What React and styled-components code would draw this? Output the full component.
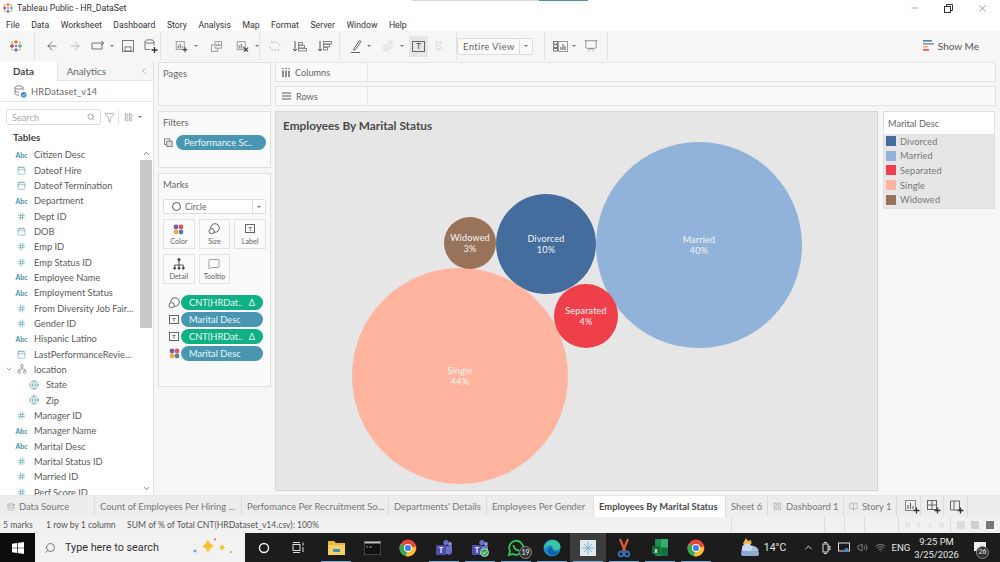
import React from 'react'
import styled, { createGlobalStyle } from 'styled-components'
import {
  ArrowLeft, ArrowRight, ChevronLeft, ChevronRight, ChevronFirst, ChevronLast, ChevronUp, ChevronDown, Search, Filter, Minus, X,
  Calendar, Hash, Globe, Network, Presentation, Pin, Paperclip, MessageSquare, Database, LayoutGrid, BookOpen, Volume2, Wifi,
} from 'lucide-react'

const Global = createGlobalStyle`
  html, body { margin: 0; padding: 0; background: #fff; }
  * { box-sizing: border-box; }
  body { font-family: Lato, "Open Sans", "Liberation Sans", sans-serif; color: #555; }
`

const Page = styled.div`
  position: relative;
  width: 1000px;
  height: 562px;
  display: flex;
  flex-direction: column;
  overflow: hidden;
  background: #fff;
`

const TitleBar = styled.div`
  height: 16px;
  flex: none;
  display: flex;
  align-items: center;
  padding-left: 2px;
  font-family: Roboto, sans-serif;
  font-size: 8.7px;
  color: #333;
  gap: 3px;
`

const TopStrip = styled.div`
  position: absolute;
  top: 0;
  left: 412px;
  width: 176px;
  height: 1px;
  background: linear-gradient(to right, #d8d8d8 0 72%, #4a90a8 72% 100%);
`

const WindowButtons = styled.div`
  margin-left: auto;
  padding-right: 1px;
  display: flex;
  align-items: center;
  color: #333;
`

const WindowButton = styled.div`
  width: 33.5px;
  height: 16px;
  display: flex;
  align-items: center;
  justify-content: center;
`

const MenuBar = styled.div`
  height: 15px;
  flex: none;
  display: flex;
  align-items: center;
  padding: 2px 0 0 6px;
  gap: 11.5px;
  font-family: Roboto, sans-serif;
  font-size: 8.7px;
  color: #333;
`

const Toolbar = styled.div`
  height: 30px;
  flex: none;
  background: #f6f6f6;
  display: flex;
  align-items: center;
  color: #666;
`

const ToolGroup = styled.div`
  height: 28px;
  width: ${p => p.$w}px;
  flex: none;
  display: flex;
  align-items: center;
  gap: ${p => p.$gap ?? 8}px;
  padding-left: ${p => p.$pad ?? 8}px;
  border-right: 1px solid #e2e2e2;
`

const ToolSpot = styled.div`
  width: 19px;
  height: 21px;
  display: flex;
  align-items: center;
  justify-content: center;
  background: ${p => (p.$on ? '#e6e6e6' : 'transparent')};
`

const Caret = styled.span`
  width: 0;
  height: 0;
  flex: none;
  margin-left: ${p => p.$ml ?? -4}px;
  border-left: 2px solid transparent;
  border-right: 2px solid transparent;
  border-top: 2px solid #777;
`

const Gap = styled.span`
  width: ${p => p.$w}px;
  flex: none;
`

const ViewSelect = styled.div`
  width: 76px;
  height: 17px;
  border: 1px solid #ddd;
  border-radius: 2px;
  background: #fafafa;
  display: flex;
  align-items: center;
  padding-left: 5px;
  font-size: 9.5px;
  letter-spacing: 0.35px;
  color: #666;
`

const SelectArrow = styled.div`
  margin-left: auto;
  width: 13px;
  height: 100%;
  border-left: 1px solid #ddd;
  display: flex;
  align-items: center;
  justify-content: center;
`

const ShowMe = styled.div`
  margin-left: auto;
  margin-right: 21px;
  display: flex;
  align-items: center;
  gap: 4px;
  font-size: 10px;
  color: #555;
`

const Main = styled.div`
  flex: 1;
  min-height: 0;
  display: flex;
  background: #f6f6f6;
`

const DataPane = styled.div`
  width: 154px;
  flex: none;
  background: #fff;
  border-right: 1px solid #e0e0e0;
  display: flex;
  flex-direction: column;
`

const PaneTabs = styled.div`
  height: 20px;
  flex: none;
  display: flex;
  align-items: center;
`

const PaneTab = styled.div`
  width: ${p => p.$w}px;
  height: 100%;
  display: flex;
  align-items: center;
  justify-content: space-between;
  padding: 0 4px 0 ${p => p.$pad}px;
  font-size: 9.8px;
  font-weight: ${p => (p.$on ? 700 : 400)};
  color: ${p => (p.$on ? '#444' : '#666')};
  background: ${p => (p.$on ? '#fff' : '#f6f6f6')};
  border-bottom: ${p => (p.$on ? 'none' : '1px solid #e4e4e4')};
  border-left: ${p => (p.$on ? 'none' : '1px solid #e4e4e4')};
`

const SourceRow = styled.div`
  height: 21px;
  flex: none;
  display: flex;
  align-items: center;
  gap: 4px;
  padding-left: 14px;
  font-size: 9.2px;
  letter-spacing: 0.2px;
  color: #666;
  border-bottom: 1px solid #e4e4e4;
`

const SearchRow = styled.div`
  height: 16px;
  margin: 7px 0 0 6px;
  flex: none;
  display: flex;
  align-items: center;
  gap: 3px;
  color: #666;
`

const SearchBox = styled.div`
  width: 95px;
  height: 16px;
  border: 1px solid #ddd;
  border-radius: 2px;
  display: flex;
  align-items: center;
  justify-content: space-between;
  padding: 0 5px;
  font-size: 9.2px;
  color: #aaa;
`

const RowDivider = styled.span`
  width: 1px;
  height: 15px;
  background: #e4e4e4;
  margin-right: 2px;
`

const TablesHead = styled.div`
  height: 22px;
  flex: none;
  padding: 6px 0 0 13px;
  font-size: 9.8px;
  font-weight: 700;
  color: #444;
`

const ListWrap = styled.div`
  flex: 1;
  min-height: 0;
  display: flex;
`

const FieldList = styled.div`
  flex: 1;
  min-width: 0;
  overflow: hidden;
`

const FieldRow = styled.div`
  height: 15.35px;
  display: flex;
  align-items: center;
  padding-left: ${p => (p.$sub ? 27 : p.$tree ? 5 : 15)}px;
  font-size: 9.3px;
  white-space: nowrap;
  color: #5a5a5a;
`

const FieldIcon = styled.span`
  width: 13px;
  margin-right: 6px;
  flex: none;
  display: flex;
  justify-content: center;
  align-items: center;
  color: ${p => (p.$tree ? '#666' : '#3f8f9f')};
  font-size: 6.8px;
  font-weight: 700;
`

const TreeCaret = styled.span`
  width: 10px;
  flex: none;
  color: #777;
  display: flex;
`

const ScrollBar = styled.div`
  width: 12px;
  flex: none;
  margin-right: 1px;
  display: flex;
  flex-direction: column;
  justify-content: space-between;
  align-items: center;
  color: #555;
`

const ScrollTrack = styled.div`
  width: 100%;
  flex: none;
  display: flex;
  flex-direction: column;
`

const ScrollBtn = styled.div`
  height: 13px;
  flex: none;
  display: flex;
  align-items: center;
  justify-content: center;
`

const ScrollThumb = styled.div`
  width: 100%;
  height: 168px;
  flex: none;
  background: #c9c9c9;
`

const CardsColumn = styled.div`
  width: 113px;
  margin: 1px 0 0 4px;
  flex: none;
  display: flex;
  flex-direction: column;
  gap: 5px;
`

const Card = styled.div`
  height: ${p => p.$h}px;
  flex: none;
  border: 1px solid #e0e0e0;
  background: #fafafa;
  padding: 5px 4px 0;
`

const CardTitle = styled.div`
  font-size: 9.4px;
  line-height: 11px;
  color: #666;
`

const FilterRow = styled.div`
  display: flex;
  align-items: center;
  gap: 3px;
  margin-top: 7px;
  padding-left: 1px;
  color: #777;
`

const Pill = styled.div`
  width: ${p => p.$w}px;
  height: 15px;
  flex: none;
  border-radius: 8px;
  background: ${p => (p.$green ? '#0fb083' : '#4996b2')};
  color: #e8f6f8;
  display: flex;
  align-items: center;
  justify-content: space-between;
  padding: 0 8px;
  font-size: 9.3px;
  white-space: nowrap;
`

const MarkSelect = styled.div`
  height: 15px;
  margin-top: 9px;
  border: 1px solid #ddd;
  border-radius: 2px;
  background: #fff;
  display: flex;
  align-items: center;
  padding-left: 8px;
  gap: 4px;
  font-size: 8.6px;
  color: #666;
`

const MarkRing = styled.span`
  width: 9px;
  height: 9px;
  border: 1px solid #555;
  border-radius: 50%;
`

const MarkGrid = styled.div`
  margin-top: 5px;
  display: grid;
  grid-template-columns: repeat(3, 1fr);
  column-gap: 4px;
  row-gap: 5px;
`

const MarkButton = styled.div`
  height: 30px;
  border: 1px solid #e2e2e2;
  background: #fbfbfb;
  display: flex;
  flex-direction: column;
  align-items: center;
  justify-content: flex-end;
  gap: 2px;
  padding-bottom: 2px;
  font-size: 7.2px;
  color: #666;
`

const PillList = styled.div`
  margin-top: 11px;
  display: flex;
  flex-direction: column;
  gap: 2px;
`

const PillRow = styled.div`
  display: flex;
  align-items: center;
  gap: 1px;
  padding-left: 5px;
`

const IconSlot = styled.span`
  width: 12px;
  flex: none;
  display: flex;
  justify-content: center;
`

const TextBadge = styled.span`
  width: ${p => (p.$big ? 13 : 10)}px;
  height: ${p => (p.$big ? 11 : 9)}px;
  flex: none;
  border: 1px solid #666;
  font-size: ${p => (p.$big ? 8 : 6.5)}px;
  line-height: ${p => (p.$big ? 9 : 7)}px;
  text-align: center;
  color: #444;
`

const Workspace = styled.div`
  width: 721px;
  margin: 1px 0 0 4px;
  flex: none;
  display: flex;
  flex-direction: column;
`

const Shelf = styled.div`
  height: 20px;
  margin-bottom: ${p => p.$mb}px;
  flex: none;
  border: 1px solid #e2e2e2;
  background: #fafafa;
  display: flex;
`

const ShelfLabel = styled.div`
  width: 92px;
  border-right: 1px solid #e6e6e6;
  display: flex;
  align-items: center;
  gap: 5px;
  padding-left: 6px;
  font-size: 9.2px;
  color: #666;
`

const Canvas = styled.div`
  display: flex;
  gap: 5px;
  align-items: flex-start;
`

const ChartPanel = styled.div`
  position: relative;
  width: 603px;
  height: 380px;
  flex: none;
  background: #e6e6e6;
  border: 1px solid #d4d4d4;
`

const ChartTitle = styled.div`
  position: absolute;
  top: 7px;
  left: 7px;
  font-size: 11.8px;
  line-height: 14px;
  font-weight: 700;
  color: #4a4a4a;
  white-space: nowrap;
`

const Legend = styled.div`
  width: 112px;
  height: 98px;
  flex: none;
  border: 1px solid #e0e0e0;
  background: #e6e6e6;
`

const LegendHead = styled.div`
  height: 22px;
  background: #fff;
  display: flex;
  align-items: center;
  padding-left: 4px;
  font-size: 9.2px;
  color: #666;
`

const LegendRow = styled.div`
  height: 14.6px;
  display: flex;
  align-items: center;
  gap: 4px;
  padding-left: 2px;
  font-size: 9.2px;
  letter-spacing: 0.15px;
  color: #777;
`

const Swatch = styled.span`
  width: 10px;
  height: 10px;
  background: ${p => p.$c};
`

const TabStrip = styled.div`
  height: 22px;
  flex: none;
  background: #ededed;
  border-top: 1px solid #e6e6e6;
  display: flex;
  font-size: 9.4px;
  color: #777;
`

const SheetTab = styled.div`
  width: ${p => p.$w}px;
  flex: none;
  display: flex;
  align-items: center;
  gap: 4px;
  padding-left: ${p => p.$pad ?? 5}px;
  white-space: nowrap;
  overflow: hidden;
  border-right: 1px solid #dcdcdc;
  background: ${p => (p.$on ? '#fff' : 'transparent')};
  color: ${p => (p.$on ? '#4a4a4a' : '#777')};
  font-weight: ${p => (p.$on ? 700 : 400)};
`

const StatusBar = styled.div`
  height: 16px;
  flex: none;
  background: #f1f1f1;
  display: flex;
  align-items: center;
  padding-left: 3px;
  font-size: 8.6px;
  color: #555;
`

const StatusItem = styled.span`
  width: ${p => p.$w}px;
  flex: none;
  white-space: nowrap;
`

const StatusRight = styled.div`
  margin-left: auto;
  height: 100%;
  display: flex;
  align-items: center;
`

const StatusCell = styled.div`
  width: ${p => p.$w}px;
  height: 100%;
  border-left: 1px solid #dcdcdc;
  display: flex;
  align-items: center;
  justify-content: space-around;
  padding: 0 3px;
  color: #c4c4c4;
`

const ViewDot = styled.span`
  width: ${p => p.$w ?? 8}px;
  height: 8px;
  background: ${p => p.$c};
`

const Taskbar = styled.div`
  height: 29px;
  flex: none;
  background: #1c1c1c;
  display: flex;
  align-items: center;
  color: #eee;
`

const StartButton = styled.div`
  width: 35px;
  height: 100%;
  background: #0d0d0d;
  display: flex;
  align-items: center;
  justify-content: center;
`

const TaskSearch = styled.div`
  width: 210px;
  height: 100%;
  background: #f2f2f2;
  display: flex;
  align-items: center;
  gap: 9px;
  padding-left: 9px;
  font-family: Roboto, sans-serif;
  font-size: 10.8px;
  color: #333;
`

const MirrorIcon = styled.span`
  display: flex;
  transform: scaleX(-1);
`

const Sparkles = styled.span`
  margin-left: auto;
  margin-right: 7px;
  display: flex;
`

const TaskApps = styled.div`
  display: flex;
  align-items: center;
  height: 100%;
  padding-left: 1px;
`

const TaskApp = styled.div`
  position: relative;
  width: ${p => p.$w ?? 36}px;
  height: 100%;
  margin-left: ${p => p.$ml ?? 0}px;
  display: flex;
  align-items: center;
  justify-content: center;
  background: ${p => (p.$on ? '#3c3c3c' : 'transparent')};
  &::after {
    content: '';
    position: absolute;
    left: 3px;
    right: 3px;
    bottom: 0;
    height: ${p => (p.$open ? 1.5 : 0)}px;
    background: #7fb4d8;
  }
`

const CountBadge = styled.span`
  position: absolute;
  right: ${p => p.$r ?? 2}px;
  bottom: 3px;
  width: 13px;
  height: 13px;
  border-radius: 50%;
  background: #333;
  border: 1px solid #888;
  font-size: 7px;
  line-height: 11px;
  text-align: center;
  color: #eee;
`

const Tray = styled.div`
  margin-left: auto;
  height: 100%;
  display: flex;
  align-items: center;
  font-family: Roboto, sans-serif;
  font-size: 9.6px;
  color: #e6e6e6;
`

const TrayItem = styled.div`
  position: relative;
  width: ${p => p.$w}px;
  height: 100%;
  flex: none;
  padding-left: ${p => p.$pl ?? 0}px;
  display: flex;
  align-items: center;
  justify-content: center;
`

const Temp = styled(TrayItem)`
  font-size: 10.4px;
`

const Clock = styled.div`
  width: 47px;
  flex: none;
  text-align: center;
  font-size: 9.4px;
  line-height: 13px;
`

const Ic = ({ w = 14, h = 14, children }) => (
  <svg width={w} height={h} viewBox={`0 0 ${w} ${h}`} fill="none" stroke="currentColor" strokeWidth="1">{children}</svg>
)

const Logo = ({ s = 14 }) => (
  <svg width={s} height={s} viewBox="0 0 14 14" strokeWidth="1.3">
    <path d="M7 1v4M5 3h4" stroke="#e8762b" />
    <path d="M7 9v4M5 11h4" stroke="#5a7fb8" />
    <path d="M1 7h4M3 5v4" stroke="#c23a4b" />
    <path d="M9 7h4M11 5v4" stroke="#6aa0b8" />
    <path d="M3 2.500v2M2 3.500h2M11 2.500v2M10 3.500h2M3 9.500v2M2 10.500h2M11 9.500v2M10 10.500h2" stroke="#e0a040" strokeWidth=".8" />
    <path d="M6 7h2M7 6v2" stroke="#5a6f90" />
  </svg>
)

const ChartAdd = ({ x }) => (
  <Ic w={16} h={15}>
    <rect x="1.500" y="1.500" width="10" height="10" stroke="#888" />
    <path d="M4 10V6M6.500 10V4M9 10V7" stroke="#555" />
    {x ? <path d="M10 9l5 5M15 9l-5 5" stroke="#333" strokeWidth="1.300" /> : <path d="M12.500 8.500v6M9.500 11.500h6" stroke="#333" strokeWidth="1.300" />}
  </Ic>
)

const SortIcon = ({ flip }) => (
  <Ic w={15} h={13}>
    <path d="M3 1v10M1 9l2 2 2-2" stroke="#555" />
    {(flip ? [[6, 2, 8], [6, 5, 6], [6, 8, 4]] : [[6, 3, 4], [6, 6, 6], [6, 9, 8]]).map(([x, y, l]) => (
      <rect key={y} x={x + 0.5} y={y - 0.5} width={l} height="2.400" stroke="#888" />
    ))}
  </Ic>
)

const PenIcon = () => (
  <Ic w={11} h={14}>
    <path d="M3 9.500L8.500 1.500l1.500 1L4.500 10.500 2.700 11.300z" stroke="#666" />
    <path d="M0 13.500h9" stroke="#666" />
  </Ic>
)

const SourceIcon = () => (
  <svg width="13" height="13" viewBox="0 0 13 13" fill="none" stroke="#778" strokeWidth=".9">
    <ellipse cx="5" cy="2.500" rx="4" ry="1.700" />
    <path d="M1 2.500v6c0 1 2 1.700 4 1.700M9 2.500v3M1 5.500c0 1 2 1.700 4 1.700" />
    <circle cx="9.700" cy="9.700" r="2.800" fill="#3f8fc0" stroke="none" />
    <path d="M8.500 9.700l1 1 1.500-1.700" stroke="#fff" strokeWidth=".7" />
  </svg>
)

const ColorDots = ({ s = 11 }) => (
  <svg width={s} height={s} viewBox="0 0 11 11">
    <circle cx="3" cy="3" r="2.400" fill="#7a5aa0" />
    <circle cx="8" cy="3" r="2.400" fill="#e2506a" />
    <circle cx="3" cy="8" r="2.400" fill="#f0a35a" />
    <circle cx="8" cy="8" r="2.400" fill="#5a7f98" />
  </svg>
)

const SizeIcon = () => (
  <svg width="12" height="12" viewBox="0 0 12 12" fill="none" stroke="#555" strokeWidth=".9">
    <circle cx="7" cy="5" r="4.300" />
    <circle cx="3.600" cy="8.200" r="2.600" fill="#fbfbfb" />
  </svg>
)

const DetailIcon = () => (
  <svg width="12" height="12" viewBox="0 0 12 12" fill="none" stroke="#444" strokeWidth=".9">
    <circle cx="6" cy="1.700" r="1.200" fill="#444" />
    <path d="M6 3v4M1.700 9V7h8.600v2M6 7v2" />
    <circle cx="1.700" cy="10.200" r="1" fill="#444" />
    <circle cx="6" cy="10.200" r="1" fill="#444" />
    <circle cx="10.300" cy="10.200" r="1" fill="#444" />
  </svg>
)

const ShowMeIcon = () => (
  <svg width="11" height="12" viewBox="0 0 11 12">
    <rect x="0" y="0" width="9" height="1.600" fill="#5a7fb8" />
    <rect x="0" y="3" width="11" height="1.600" fill="#8a93a8" />
    <rect x="0" y="6" width="5" height="1.600" fill="#e8b090" />
    <rect x="0" y="9" width="6" height="1.800" fill="#e06060" />
  </svg>
)

const ChromeIcon = () => (
  <svg width="18" height="18" viewBox="0 0 18 18">
    <circle cx="9" cy="9" r="8.500" fill="#e8453c" />
    <path d="M9 9L1.600 4.800A8.500 8.500 0 0 0 7 17.300z" fill="#34a853" />
    <path d="M9 9l7.900-1.500A8.500 8.500 0 0 1 7 17.300z" fill="#fbc02d" />
    <circle cx="9" cy="9" r="4" fill="#fff" />
    <circle cx="9" cy="9" r="3.100" fill="#3f80e8" />
  </svg>
)

const FolderIcon = () => (
  <svg width="17" height="15" viewBox="0 0 17 15">
    <path d="M0 1h6l2 2h9v12H0z" fill="#e8b83e" />
    <rect x="0" y="5" width="17" height="10" fill="#f5cf62" />
    <rect x="5" y="9" width="7" height="3" fill="#3f8fc0" />
  </svg>
)

const ConsoleIcon = () => (
  <svg width="17" height="14" viewBox="0 0 17 14">
    <rect width="17" height="14" fill="#111" stroke="#888" strokeWidth=".8" />
    <rect x=".5" y=".5" width="16" height="2" fill="#bbb" />
    <path d="M2 5l2 1.500M5 6h3" stroke="#ccc" strokeWidth=".7" />
  </svg>
)

const TeamsIcon = ({ check }) => (
  <svg width="18" height="18" viewBox="0 0 18 18">
    <circle cx="11" cy="3.500" r="2.600" fill="#6a70c8" />
    <circle cx="15" cy="5" r="1.900" fill="#8f93db" />
    <path d="M8 7h9v6a3 3 0 0 1-5 2H8z" fill="#6a70c8" />
    <rect x="1" y="6" width="10" height="10" rx="1" fill="#4a50b0" />
    <text x="6" y="14" fontSize="7.500" fontWeight="700" fill="#fff" textAnchor="middle">T</text>
    {check && <circle cx="13.500" cy="13.500" r="4" fill="#2aa84a" stroke="#fff" strokeWidth=".7" />}
    {check && <path d="M11.700 13.500l1.300 1.400 2.300-2.600" stroke="#fff" strokeWidth=".9" fill="none" />}
  </svg>
)

const WhatsAppIcon = () => (
  <svg width="18" height="18" viewBox="0 0 18 18" fill="none">
    <path d="M2 16l1-4a7 7 0 1 1 3 3z" stroke="#30c75a" strokeWidth="1.800" />
    <path d="M6.500 6c0 3 2.500 5.500 5.500 5.500" stroke="#30c75a" strokeWidth="1.800" />
  </svg>
)

const EdgeIcon = () => (
  <svg width="18" height="18" viewBox="0 0 18 18">
    <circle cx="9" cy="9" r="8.500" fill="#1a8ac8" />
    <path d="M1 9c1-5 5-8 9-8 4 0 7.500 3 7.500 7 0 2-2 3-4.500 3-2 0-3-1-3-2 0-2-3-4-5-2-2 1.500-3 3-4 2z" fill="#36c8a0" />
    <path d="M5 14c-1-3 1-6 4-5 0 3 3 5 7 3-2 4-7 6-11 2z" fill="#1060a8" />
  </svg>
)

const TableauApp = () => (
  <svg width="16" height="16" viewBox="0 0 16 16">
    <rect width="16" height="16" fill="#dfe8ee" />
    <g stroke="#88b4c8" strokeWidth="1">
      <path d="M8 2v12M2 8h12M4 4l8 8M12 4l-8 8" />
    </g>
  </svg>
)

const SnipIcon = () => (
  <svg width="16" height="20" viewBox="0 0 16 20" fill="none">
    <path d="M4 1l5 12M12 1L7 13" stroke="#e05a3a" strokeWidth="2.200" />
    <circle cx="5" cy="16" r="2.400" stroke="#2a78c8" strokeWidth="1.600" />
    <circle cx="11" cy="16" r="2.400" stroke="#2a78c8" strokeWidth="1.600" />
  </svg>
)

const ExcelIcon = () => (
  <svg width="16" height="17" viewBox="0 0 16 17">
    <rect x="3" width="13" height="17" rx="1" fill="#1f8f50" />
    <rect x="9" width="7" height="8" fill="#33b06c" />
    <rect x="9" y="9" width="7" height="8" fill="#14703e" />
    <rect y="7" width="8" height="8" fill="#0f6a38" />
    <text x="4" y="13.500" fontSize="6.500" fontWeight="700" fill="#fff" textAnchor="middle">x</text>
  </svg>
)

const WeatherIcon = () => (
  <svg width="20" height="19" viewBox="0 0 20 19">
    <path d="M7 0l2 3 3-1 .5 3.500L8 9 4 5.500z" fill="#f2b440" />
    <ellipse cx="11" cy="12.500" rx="8.500" ry="5" fill="#a8bfe0" />
    <ellipse cx="8" cy="10" rx="5" ry="4.500" fill="#c6d6ee" />
    <rect x="2" y="13" width="18" height="5" rx="2.500" fill="#8eaad4" />
  </svg>
)

const SparkleIcon = () => (
  <svg width="46" height="20" viewBox="0 0 46 20">
    <path d="M16 1q1 5 6 7-5 2-6 8-1-6-6-8 5-2 6-7z" fill="#f6c02c" />
    <path d="M30 6q.6 2.500 3 3.500-2.400 1-3 3.500-.6-2.500-3-3.500 2.400-1 3-3.500z" fill="#f6c02c" />
    <path d="M3 11q.4 1.500 2 2-1.600.5-2 2-.4-1.500-2-2 1.600-.5 2-2z" fill="#3d9be0" />
    <circle cx="23" cy="1.500" r="1" fill="#d8603a" />
    <circle cx="39" cy="14" r="1" fill="#a0b84a" />
  </svg>
)

const menus = ['File', 'Data', 'Worksheet', 'Dashboard', 'Story', 'Analysis', 'Map', 'Format', 'Server', 'Window', 'Help']

const fields = [
  ['abc', 'Citizen Desc'], ['date', 'Dateof Hire'], ['date', 'Dateof Termination'], ['abc', 'Department'],
  ['num', 'Dept ID'], ['date', 'DOB'], ['num', 'Emp ID'], ['num', 'Emp Status ID'], ['abc', 'Employee Name'],
  ['abc', 'Employment Status'], ['num', 'From Diversity Job Fair...'], ['num', 'Gender ID'], ['abc', 'Hispanic Latino'],
  ['date', 'LastPerformanceRevie...'], ['tree', 'location'], ['geo', 'State', true], ['geo', 'Zip', true],
  ['num', 'Manager ID'], ['abc', 'Manager Name'], ['abc', 'Marital Desc'], ['num', 'Marital Status ID'],
  ['num', 'Married ID'], ['num', 'Perf Score ID'],
]

const bubbles = [
  { name: 'Married', pct: '40%', c: '#91b3d9', x: 423, y: 133, r: 103 },
  { name: 'Single', pct: '44%', c: '#ffb4a0', x: 184, y: 264, r: 108 },
  { name: 'Divorced', pct: '10%', c: '#446d9e', x: 270, y: 132, r: 50 },
  { name: 'Separated', pct: '4%', c: '#ee3f4a', x: 310, y: 204, r: 32 },
  { name: 'Widowed', pct: '3%', c: '#98735a', x: 194, y: 131, r: 26 },
]

const legend = [
  ['Divorced', '#446d9e'], ['Married', '#91b3d9'], ['Separated', '#ee3f4a'], ['Single', '#ffb4a0'], ['Widowed', '#98735a'],
]

const tabs = [
  ['Count of Employees Per Hiring ...', 147], ['Perfomance Per Recruitment So...', 147], ["Departments' Details", 98], ['Employees Per Gender', 107],
]

const FieldGlyph = ({ type }) => {
  if (type === 'abc') return <FieldIcon>Abc</FieldIcon>
  if (type === 'date') return <FieldIcon><Calendar size={9} strokeWidth={1.3} /></FieldIcon>
  if (type === 'num') return <FieldIcon><Hash size={9} strokeWidth={1.4} /></FieldIcon>
  if (type === 'geo') return <FieldIcon><Globe size={10} strokeWidth={1.3} /></FieldIcon>
  return <FieldIcon $tree><Network size={10} strokeWidth={1.2} /></FieldIcon>
}

export default function App() {
  return (
    <Page>
      <Global />
      <TopStrip />
      <TitleBar>
        <Logo s={12} />
        <span>Tableau Public - HR_DataSet</span>
        <WindowButtons>
          <WindowButton><Minus size={10} strokeWidth={1} /></WindowButton>
          <WindowButton>
            <Ic w={9} h={9}><rect x=".5" y="2.500" width="6" height="6" /><path d="M2.500 2.500v-2h6v6h-2" /></Ic>
          </WindowButton>
          <WindowButton><X size={11} strokeWidth={1} /></WindowButton>
        </WindowButtons>
      </TitleBar>
      <MenuBar>
        {menus.map(m => <span key={m}>{m}</span>)}
      </MenuBar>
      <Toolbar>
        <ToolGroup $w={35} $pad={9}><Logo /></ToolGroup>
        <ToolGroup $w={126} $pad={8} $gap={5}>
          <ToolSpot><ArrowLeft size={14} strokeWidth={1.2} color="#444" /></ToolSpot>
          <ToolSpot><ArrowRight size={14} strokeWidth={1.2} color="#aaa" /></ToolSpot>
          <ToolSpot><Ic w={15} h={10}><path d="M1 2h10v6H1zM10 0l3 2-3 2" stroke="#777" /></Ic></ToolSpot>
          <Caret $ml={-3} />
          <ToolSpot><Ic w={12} h={12}><rect x=".5" y=".5" width="11" height="11" stroke="#777" /><rect x="3" y="7" width="6" height="4" stroke="#777" /></Ic></ToolSpot>
          <ToolSpot>
            <Ic w={14} h={15}>
              <ellipse cx="5.500" cy="2.500" rx="4.500" ry="1.800" stroke="#777" />
              <path d="M1 2.500v8h5M10 2.500v4" stroke="#777" />
              <path d="M10.500 8v6M7.500 11h6" stroke="#333" strokeWidth="1.300" />
            </Ic>
          </ToolSpot>
        </ToolGroup>
        <ToolGroup $w={99} $pad={14} $gap={6}>
          <ChartAdd />
          <Caret $ml={0} />
          <Gap $w={1} />
          <Ic w={14} h={13}><rect x=".5" y="4.500" width="8" height="8" stroke="#888" /><rect x="5" y=".5" width="8" height="8" stroke="#888" fill="#f6f6f6" /><path d="M7 6V4M9 6V2.500M11 6V3.500" stroke="#666" /></Ic>
          <Gap $w={2} />
          <ChartAdd x />
          <Caret $ml={0} />
        </ToolGroup>
        <ToolGroup $w={80} $pad={8} $gap={10}>
          <Ic w={14} h={13}><path d="M3 2h6l3 3v2M11 10H5L2 8V6" stroke="#bbb" strokeDasharray="2 1" /></Ic>
          <SortIcon />
          <SortIcon flip />
        </ToolGroup>
        <ToolGroup $w={117} $pad={11} $gap={5}>
          <PenIcon />
          <Caret $ml={0} />
          <Gap $w={1} />
          <Paperclip size={12} strokeWidth={1} color="#bbb" />
          <Caret $ml={1} />
          <ToolSpot $on><TextBadge $big>T</TextBadge></ToolSpot>
          <Pin size={11} strokeWidth={1} color="#bbb" />
        </ToolGroup>
        <ToolGroup $w={88} $pad={0}>
          <ViewSelect>Entire View<SelectArrow><Caret $ml={0} /></SelectArrow></ViewSelect>
        </ToolGroup>
        <ToolGroup $w={63} $pad={8} $gap={3}>
          <Ic w={15} h={11}><rect x=".5" y=".5" width="4" height="2.500" stroke="#777" /><rect x=".5" y="4" width="4" height="2.500" stroke="#777" /><rect x=".5" y="7.500" width="4" height="2.500" stroke="#777" /><rect x="5.500" y=".5" width="9" height="10" stroke="#999" /><path d="M8 9V6M10 9V3M12 9V5" stroke="#555" /></Ic>
          <Caret $ml={1} />
          <Gap $w={2} />
          <Presentation size={14} strokeWidth={1} color="#555" />
        </ToolGroup>
        <ShowMe><ShowMeIcon />Show Me</ShowMe>
      </Toolbar>
      <Main>
        <DataPane>
          <PaneTabs>
            <PaneTab $on $w={57} $pad={13}>Data</PaneTab>
            <PaneTab $w={97} $pad={9}>
              Analytics
              <ChevronLeft size={10} strokeWidth={1.2} />
            </PaneTab>
          </PaneTabs>
          <SourceRow>
            <SourceIcon />
            HRDataset_v14
          </SourceRow>
          <SearchRow>
            <SearchBox>Search<Search size={8} strokeWidth={1.4} color="#555" /></SearchBox>
            <Filter size={11} strokeWidth={1} />
            <RowDivider />
            <LayoutGrid size={9} strokeWidth={1.2} />
            <Caret $ml={2} />
          </SearchRow>
          <TablesHead>Tables</TablesHead>
          <ListWrap>
            <FieldList>
              {fields.map(([type, name, sub]) => (
                <FieldRow key={name} $sub={sub} $tree={type === 'tree'}>
                  {type === 'tree' && <TreeCaret><ChevronDown size={8} /></TreeCaret>}
                  <FieldGlyph type={type} />
                  {name}
                </FieldRow>
              ))}
            </FieldList>
            <ScrollBar>
              <ScrollTrack>
                <ScrollBtn><ChevronUp size={9} strokeWidth={2} /></ScrollBtn>
                <ScrollThumb />
              </ScrollTrack>
              <ScrollBtn><ChevronDown size={9} strokeWidth={2} /></ScrollBtn>
            </ScrollBar>
          </ListWrap>
        </DataPane>
        <CardsColumn>
          <Card $h={44}><CardTitle>Pages</CardTitle></Card>
          <Card $h={57}>
            <CardTitle>Filters</CardTitle>
            <FilterRow>
              <Ic w={10} h={10}><rect x=".5" y=".5" width="6" height="6" /><rect x="3" y="3" width="6" height="6" fill="#ddd" /></Ic>
              <Pill $w={90}>Performance Sc..</Pill>
            </FilterRow>
          </Card>
          <Card $h={214}>
            <CardTitle>Marks</CardTitle>
            <MarkSelect>
              <MarkRing />Circle
              <SelectArrow><Caret $ml={0} /></SelectArrow>
            </MarkSelect>
            <MarkGrid>
              <MarkButton><ColorDots />Color</MarkButton>
              <MarkButton><SizeIcon />Size</MarkButton>
              <MarkButton><TextBadge>T</TextBadge><Gap $w={1} />Label</MarkButton>
              <MarkButton><DetailIcon />Detail</MarkButton>
              <MarkButton><MessageSquare size={12} strokeWidth={1} color="#444" />Tooltip</MarkButton>
            </MarkGrid>
            <PillList>
              <PillRow><IconSlot><SizeIcon /></IconSlot><Pill $green $w={82}>CNT(HRDat..<span>Δ</span></Pill></PillRow>
              <PillRow><IconSlot><TextBadge>T</TextBadge></IconSlot><Pill $w={82}>Marital Desc</Pill></PillRow>
              <PillRow><IconSlot><TextBadge>T</TextBadge></IconSlot><Pill $green $w={82}>CNT(HRDat..<span>Δ</span></Pill></PillRow>
              <PillRow><IconSlot><ColorDots /></IconSlot><Pill $w={82}>Marital Desc</Pill></PillRow>
            </PillList>
          </Card>
        </CardsColumn>
        <Workspace>
          <Shelf $mb={4}>
            <ShelfLabel><Ic w={8} h={9}><path d="M1 2.500V9M4 2.500V9M7 2.500V9" stroke="#555" strokeWidth="1.300" /><path d="M1 0v1M4 0v1M7 0v1" stroke="#555" strokeWidth="1.300" /></Ic>Columns</ShelfLabel>
          </Shelf>
          <Shelf $mb={5}>
            <ShelfLabel><Ic w={9} h={8}><path d="M0 1h9M0 4h9M0 7h9" stroke="#555" /></Ic>Rows</ShelfLabel>
          </Shelf>
          <Canvas>
            <ChartPanel>
              <ChartTitle>Employees By Marital Status</ChartTitle>
              <svg width="601" height="378" viewBox="0 0 601 378">
                {bubbles.map(b => (
                  <circle key={b.name} cx={b.x} cy={b.y} r={b.r} fill={b.c} />
                ))}
                {bubbles.map(b => (
                  <text key={b.name} x={b.x} textAnchor="middle" fontSize="9" fill="#f4f4f4" letterSpacing=".2">
                    <tspan x={b.x} y={b.y - 2}>{b.name}</tspan>
                    <tspan x={b.x} y={b.y + 9}>{b.pct}</tspan>
                  </text>
                ))}
              </svg>
            </ChartPanel>
            <Legend>
              <LegendHead>Marital Desc</LegendHead>
              {legend.map(([name, c]) => (
                <LegendRow key={name}><Swatch $c={c} />{name}</LegendRow>
              ))}
            </Legend>
          </Canvas>
        </Workspace>
      </Main>
      <TabStrip>
        <SheetTab $w={95} $pad={7}><Database size={8} strokeWidth={1.2} />Data Source</SheetTab>
        {tabs.map(([name, w]) => <SheetTab key={name} $w={w}>{name}</SheetTab>)}
        <SheetTab $on $w={132}>Employees By Marital Status</SheetTab>
        <SheetTab $w={42}>Sheet 6</SheetTab>
        <SheetTab $w={76}><LayoutGrid size={9} strokeWidth={1} />Dashboard 1</SheetTab>
        <SheetTab $w={53}><BookOpen size={9} strokeWidth={1} />Story 1</SheetTab>
        <SheetTab $w={24} $pad={7}><ChartAdd /></SheetTab>
        <SheetTab $w={23} $pad={6}><Ic w={14} h={14}><rect x=".5" y=".5" width="9" height="9" stroke="#666" /><path d="M5 .5v9M.5 5h9" stroke="#666" /><path d="M10.500 7.500v6M7.500 10.500h6" stroke="#333" strokeWidth="1.300" /></Ic></SheetTab>
        <SheetTab $w={24} $pad={6}><Ic w={14} h={14}><path d="M.5 1h9v9h-9zM4 1v9" stroke="#666" /><path d="M10.500 7.500v6M7.500 10.500h6" stroke="#333" strokeWidth="1.300" /></Ic></SheetTab>
      </TabStrip>
      <StatusBar>
        <StatusItem $w={43}>5 marks</StatusItem>
        <StatusItem $w={81}>1 row by 1 column</StatusItem>
        <StatusItem $w={220}>SUM of % of Total CNT(HRDataset_v14.csv): 100%</StatusItem>
        <StatusRight>
          <StatusCell $w={93} />
          <StatusCell $w={20} />
          <StatusCell $w={20} />
          <StatusCell $w={34} />
          <StatusCell $w={52}>
            <ChevronFirst size={8} />
            <ChevronLeft size={8} />
            <ChevronRight size={8} />
            <ChevronLast size={8} />
          </StatusCell>
          <StatusCell $w={50}>
            <ViewDot $c="#dcdcdc" />
            <ViewDot $c="#cfcfcf" />
            <ViewDot $c="#777" />
          </StatusCell>
        </StatusRight>
      </StatusBar>
      <Taskbar>
        <StartButton>
          <svg width="12" height="12" viewBox="0 0 12 12" fill="#fff">
            <path d="M0 1.700l5-.7v4.700H0zM5.700.9L12 0v5.700H5.700zM0 6.300h5V11l-5-.7zM5.700 6.300H12V12l-6.300-.9z" />
          </svg>
        </StartButton>
        <TaskSearch>
          <MirrorIcon><Search size={12} strokeWidth={1.2} /></MirrorIcon>
          Type here to search
          <Sparkles><SparkleIcon /></Sparkles>
        </TaskSearch>
        <TaskApps>
          <TaskApp $w={36}><Ic w={12} h={12}><circle cx="6" cy="6" r="4.500" stroke="#eee" strokeWidth="1.500" /></Ic></TaskApp>
          <TaskApp $w={32}><Ic w={13} h={11}><rect x="1" y="2.500" width="7" height="6" stroke="#ddd" /><path d="M1 .5h7M1 10.500h7M11 .5v3M11 5v5" stroke="#ddd" /></Ic></TaskApp>
          <TaskApp $open $ml={4}><FolderIcon /></TaskApp>
          <TaskApp><ConsoleIcon /></TaskApp>
          <TaskApp><ChromeIcon /></TaskApp>
          <TaskApp $open><TeamsIcon /></TaskApp>
          <TaskApp $open><TeamsIcon check /></TaskApp>
          <TaskApp $open><WhatsAppIcon /><CountBadge>19</CountBadge></TaskApp>
          <TaskApp $open><EdgeIcon /></TaskApp>
          <TaskApp $open $on><TableauApp /></TaskApp>
          <TaskApp $open><SnipIcon /></TaskApp>
          <TaskApp $open><ExcelIcon /></TaskApp>
          <TaskApp $open><ChromeIcon /></TaskApp>
        </TaskApps>
        <Tray>
          <TrayItem $w={26}><WeatherIcon /></TrayItem>
          <Temp $w={26}>14°C</Temp>
          <TrayItem $w={29} $pl={12}><ChevronUp size={11} /></TrayItem>
          <TrayItem $w={18}><Ic w={9} h={12}><rect x="1" y="2" width="5" height="8" stroke="#ddd" /><path d="M6 5l2-1v4L6 7M2 .5h3M2 11.500h3" stroke="#ddd" /></Ic></TrayItem>
          <TrayItem $w={18}><Ic w={12} h={11}><rect x=".5" y="1" width="11" height="8" stroke="#ddd" /><circle cx="8.500" cy="8" r="2" fill="#3d8ed8" stroke="none" /></Ic></TrayItem>
          <TrayItem $w={18}><Volume2 size={11} strokeWidth={1.1} /></TrayItem>
          <TrayItem $w={18}><Wifi size={11} strokeWidth={1.1} /></TrayItem>
          <TrayItem $w={24}>ENG</TrayItem>
          <Clock>9:25 PM<br />3/25/2026</Clock>
          <TrayItem $w={40}>
            <Ic w={14} h={13}><path d="M1 1h12v9H5l-2 2v-2H1z" fill="#eee" stroke="none" /></Ic>
            <CountBadge $r={11}>26</CountBadge>
          </TrayItem>
        </Tray>
      </Taskbar>
    </Page>
  )
}
